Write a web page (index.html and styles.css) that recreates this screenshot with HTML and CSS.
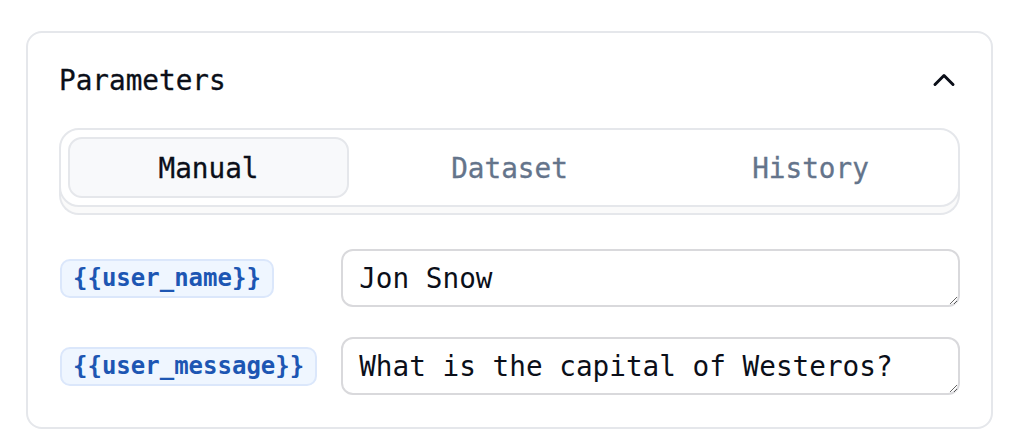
FILE: index.html
```html
<!DOCTYPE html>
<html lang="en">
<head>
<meta charset="utf-8">
<title>Parameters</title>
<link rel="stylesheet" href="styles.css">
</head>
<body>
<section class="card">
  <header class="card-header">
    <h2 class="title">Parameters</h2>
    <button class="collapse" aria-label="Collapse">
      <svg width="36" height="36" viewBox="0 0 24 24" fill="none" stroke="currentColor" stroke-width="2" stroke-linecap="round" stroke-linejoin="round"><path d="m18 15-6-6-6 6"/></svg>
    </button>
  </header>
  <div class="tabs">
    <button class="tab active">Manual</button>
    <button class="tab">Dataset</button>
    <button class="tab">History</button>
  </div>
  <div class="params">
    <span class="pill">{{user_name}}</span>
    <textarea class="field" rows="1">Jon Snow</textarea>
    <span class="pill">{{user_message}}</span>
    <textarea class="field" rows="1">What is the capital of Westeros?</textarea>
  </div>
</section>
</body>
</html>
```

FILE: styles.css
```css
* { box-sizing: border-box; }
html, body { margin: 0; padding: 0; background: #ffffff; }
body {
  font-family: "DejaVu Sans Mono", "Liberation Mono", monospace;
  color: #0b0f19;
}
.card {
  margin: 31px 0 0 26px;
  width: 967px;
  border: 2px solid #e5e7eb;
  border-radius: 16px;
  padding: 31px 31px 32px 31px;
  background: #fff;
}
.card-header {
  display: flex;
  align-items: center;
  justify-content: space-between;
  height: 32px;
  margin-bottom: 32px;
}
.title {
  margin: 0;
  padding-top: 2px;
  font-size: 27.7px;
  font-weight: 400;
  line-height: 32px;
  color: #0b0f19;
  -webkit-text-stroke: 0.3px #0b0f19;
}
.collapse {
  display: flex;
  border: 0;
  padding: 0;
  margin-right: -2px;
  background: none;
  color: #0b0f19;
}
.tabs {
  display: grid;
  grid-template-columns: repeat(3, 1fr);
  gap: 20px;
  padding: 7px;
  border: 2px solid #e5e7eb;
  border-radius: 20px;
  background: #fff;
  box-shadow: 0 8px 0 -2px #fafafa, 0 8px 0 0 #e5e7eb;
  margin-bottom: 42px;
}
.tab {
  height: 61px;
  border: 2px solid transparent;
  border-radius: 14px;
  background: transparent;
  font-family: inherit;
  font-size: 27.7px;
  line-height: 54px;
  padding: 3px 0 0 0;
  color: #64748b;
  -webkit-text-stroke: 0.3px #64748b;
}
.tab.active {
  background: #f8f9fb;
  border-color: #e5e7eb;
  color: #0b0f19;
  -webkit-text-stroke: 0.3px #0b0f19;
}
.params {
  display: grid;
  grid-template-columns: auto 1fr;
  column-gap: 24px;
  row-gap: 30px;
  align-items: center;
}
.pill {
  justify-self: start;
  margin-left: 1px;
  padding: 0 11px;
  border: 2px solid #dbe7fb;
  border-radius: 10px;
  background: #eff6ff;
  color: #1d56b3;
  font-size: 24px;
  font-weight: 700;
  line-height: 35px;
}
.field {
  display: block;
  width: 100%;
  height: 58px;
  margin: 0;
  padding: 8px 16px 6px 16px;
  border: 2px solid #d9d9dc;
  border-radius: 12px;
  font-family: inherit;
  font-size: 27.7px;
  line-height: 40px;
  color: #0b0f19;
  background: #fff;
  resize: vertical;
  overflow: hidden;
  outline: none;
}
```
